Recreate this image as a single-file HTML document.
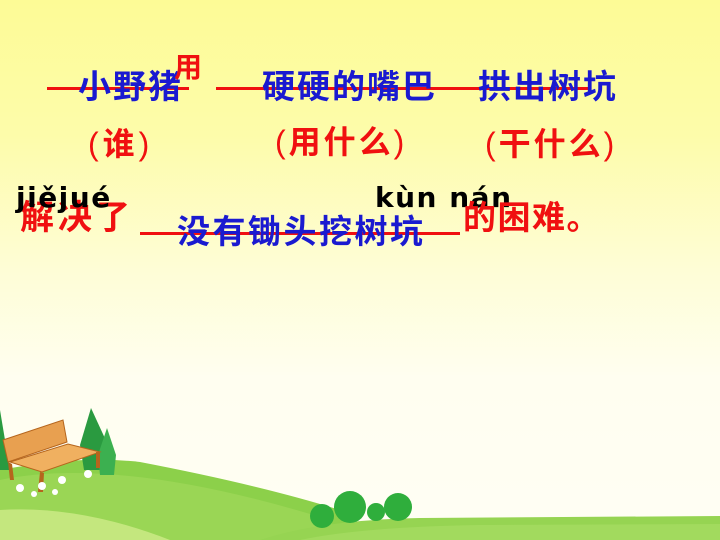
<!DOCTYPE html>
<html><head><meta charset="utf-8"><style>
body{margin:0}
#p{position:relative;width:720px;height:540px;overflow:hidden;background:linear-gradient(180deg,#fdfb96 0%,#fdfcaa 25%,#fefdd6 50%,#fffef0 70%,#fffef4 100%);font-family:"Liberation Sans","Noto Sans CJK SC",sans-serif}
.t{position:absolute;white-space:nowrap;line-height:1;font-weight:bold}
.b{color:#1a1ad0}.r{color:#f01010}.k{color:#000;font-family:"DejaVu Sans",sans-serif}
.l{position:absolute;height:3px;background:#f01010}
.pp{font-family:"Liberation Sans",sans-serif;font-weight:normal}
</style></head><body><div id="p">
<svg width="720" height="540" style="position:absolute;left:0;top:0">
<path d="M0 470 Q80 455 140 462 Q260 485 340 510 L360 540 L0 540Z" fill="#8cd04a"/>
<path d="M0 480 Q120 455 330 520 L340 540 L0 540Z" fill="#9ad655"/>
<path d="M260 540 Q320 520 420 518 L720 516 L720 540Z" fill="#96d452"/>
<path d="M300 540 Q360 527 480 525 L720 524 L720 540Z" fill="#a2da5e"/>
<path d="M0 510 Q80 505 170 540 L0 540Z" fill="#c4e77e"/>
<g fill="#2a9a40"><path d="M0 410 L10 470 L0 470Z"/><path d="M91 408 L80 445 L84 470 L104 470 L108 445Z"/><path d="M107 428 L98 455 L100 475 L114 475 L116 455Z" fill="#3cb050"/></g>
<g><path d="M3 440 L63 420 L67 442 L8 462Z" fill="#e8a050" stroke="#b5651d" stroke-width="1"/>
<path d="M10 462 L68 444 L100 452 L42 472Z" fill="#f0b060" stroke="#b5651d" stroke-width="1"/>
<path d="M8 462 L10 480 L14 480 L12 464Z M40 472 L38 492 L43 492 L44 473Z M96 452 L96 468 L100 468 L100 452Z" fill="#b5651d"/></g>
<g fill="#fff"><circle cx="20" cy="488" r="4"/><circle cx="42" cy="486" r="4"/><circle cx="62" cy="480" r="4"/><circle cx="88" cy="474" r="4"/><circle cx="34" cy="494" r="3"/><circle cx="55" cy="492" r="3"/></g>
<g fill="#2fae3c"><circle cx="322" cy="516" r="12"/><circle cx="350" cy="507" r="16"/><circle cx="376" cy="512" r="9"/><circle cx="398" cy="507" r="14"/></g>
</svg>
<div class="l" style="left:47px;top:87px;width:142px"></div>
<div class="l" style="left:216px;top:87px;width:374px"></div>
<div class="t b" style="left:78px;top:70px;font-size:33px;letter-spacing:2px">小野猪</div>
<div class="t r" style="left:174px;top:54px;font-size:28px">用</div>
<div class="t b" style="left:262px;top:70px;font-size:33px;letter-spacing:2px">硬硬的嘴巴</div>
<div class="t b" style="left:478px;top:70px;font-size:33px;letter-spacing:2px">拱出树坑</div>
<div class="t r" style="left:88px;top:128px;font-size:32px;letter-spacing:4px"><span class="pp">(</span>谁<span class="pp">)</span></div>
<div class="t r" style="left:275px;top:126px;font-size:32px;letter-spacing:3px"><span class="pp">(</span>用什么<span class="pp">)</span></div>
<div class="t r" style="left:485px;top:128px;font-size:32px;letter-spacing:3px"><span class="pp">(</span>干什么<span class="pp">)</span></div>
<div class="t r" style="left:20px;top:201px;font-size:34px;letter-spacing:4px">解决了</div>
<div class="t k" style="left:16px;top:184px;font-size:28px;letter-spacing:1.5px">jiějué</div>
<div class="t k" style="left:375px;top:184px;font-size:28px;letter-spacing:1.5px">kùn nán</div>
<div class="l" style="left:140px;top:232px;width:320px"></div>
<div class="t b" style="left:177px;top:215px;font-size:33px;letter-spacing:2.5px">没有锄头挖树坑</div>
<div class="t r" style="left:463px;top:201px;font-size:33px;letter-spacing:1.5px">的困难。</div>
</div></body></html>
